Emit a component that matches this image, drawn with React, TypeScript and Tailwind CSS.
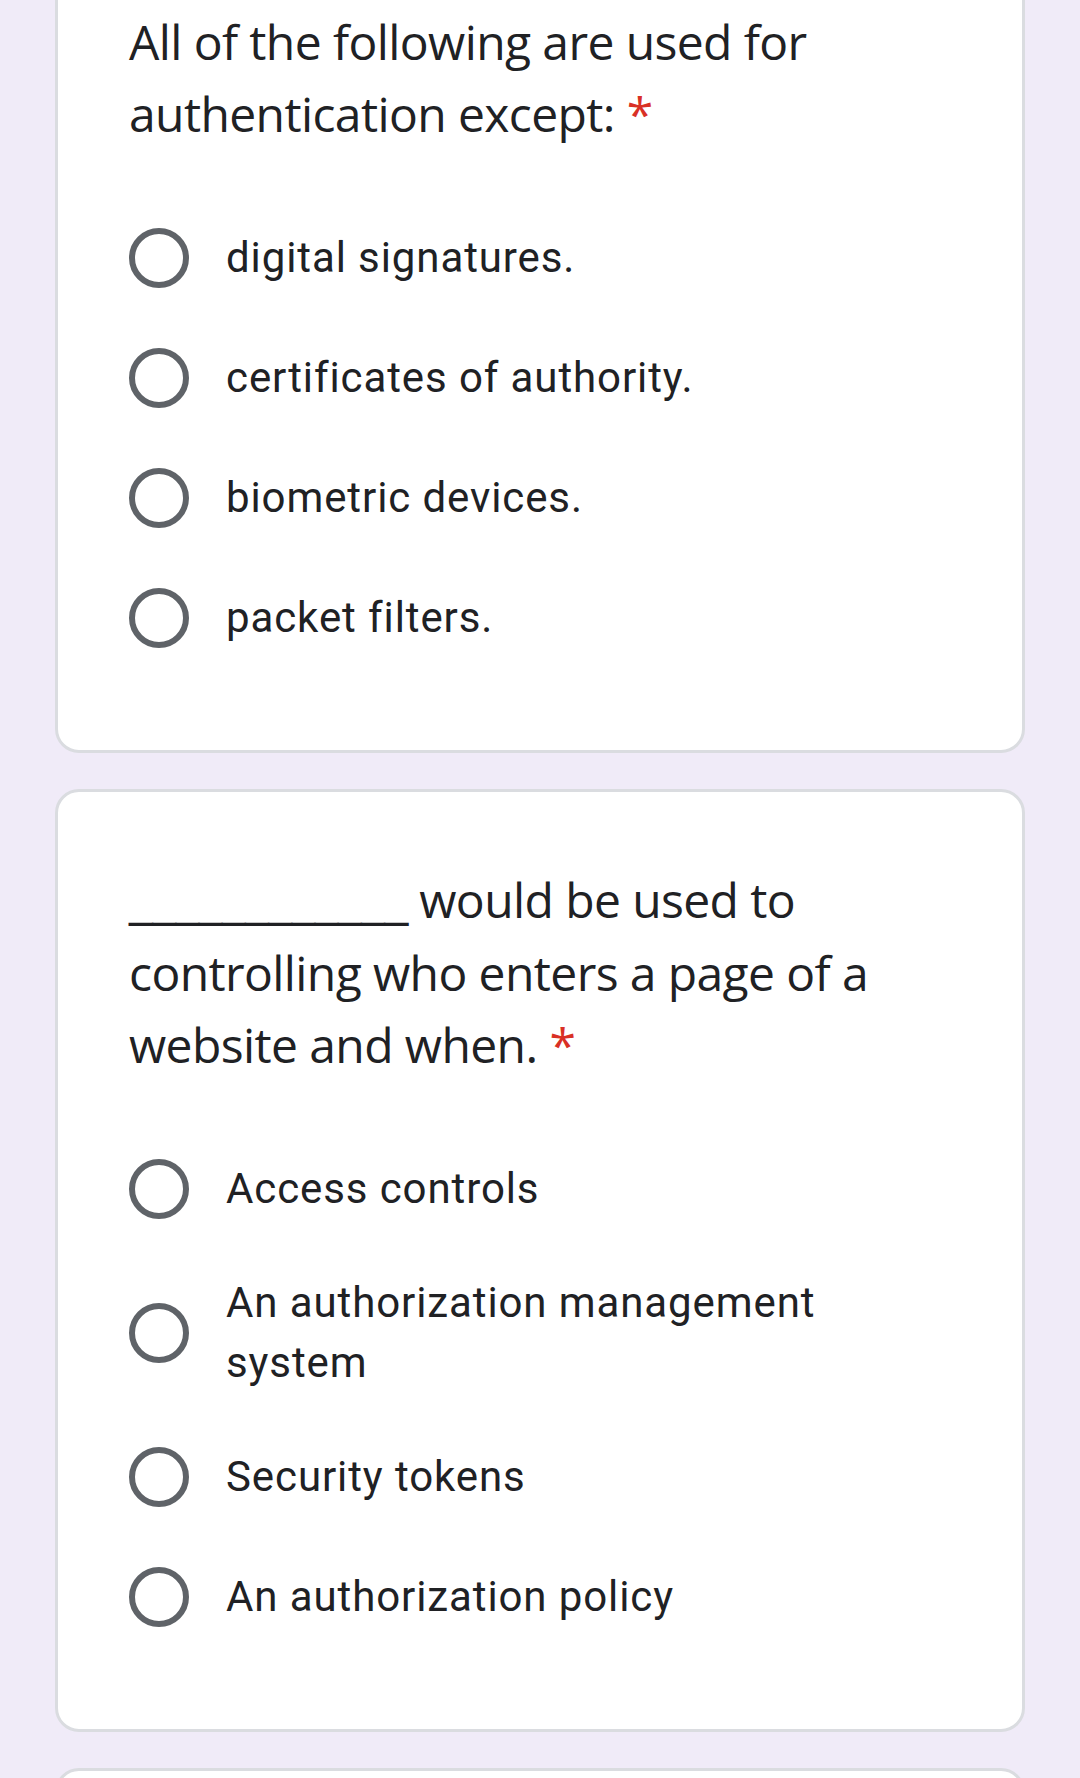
import React from "react";

const titleFont = { fontFamily: '"Open Sans", "Noto Sans", sans-serif' };

function Radio({ label }: { label: string }) {
  return (
    <div className="flex items-center min-h-[120px] py-[24px]">
      <div className="w-[60px] h-[60px] shrink-0 rounded-full border-[6px] border-[#5f6368]" />
      <div className="ml-[37px] text-[42px] leading-[60px] text-[#202124] font-['Roboto',sans-serif] tracking-[0.9px] pr-[100px]">
        {label}
      </div>
    </div>
  );
}

function Card({ title, options }: { title: React.ReactNode; options: string[] }) {
  return (
    <div className="mx-[55px] bg-white border-[3px] border-[#dadce0] rounded-[24px] px-[71px] pt-[72px] pb-[72px]">
      <div className="text-[48px] leading-[72px] text-[#202124] tracking-[-0.6px] pr-[40px]" style={titleFont}>
        {title}
        <span className="text-[#d93025] ml-[12px]">*</span>
      </div>
      <div className="mt-[48px] flex flex-col">
        {options.map((o) => (
          <Radio key={o} label={o} />
        ))}
      </div>
    </div>
  );
}

export default function App() {
  return (
    <div className="w-[1080px] h-[1778px] overflow-hidden bg-[#f0ebf8]">
      <div className="flex flex-col gap-[36px] mt-[-69px]">
        <Card
          title="All of the following are used for authentication except:"
          options={["digital signatures.", "certificates of authority.", "biometric devices.", "packet filters."]}
        />
        <Card
          title={
            <>
              <span className="tracking-[-0.8px] relative top-[-3px] font-['DejaVu_Sans',sans-serif]">____________</span> would be used to controlling who enters a page of a website and when.
            </>
          }
          options={["Access controls", "An authorization management system", "Security tokens", "An authorization policy"]}
        />
        <div className="mx-[55px] h-[200px] bg-white border-[3px] border-[#dadce0] rounded-[24px]" />
      </div>
    </div>
  );
}
